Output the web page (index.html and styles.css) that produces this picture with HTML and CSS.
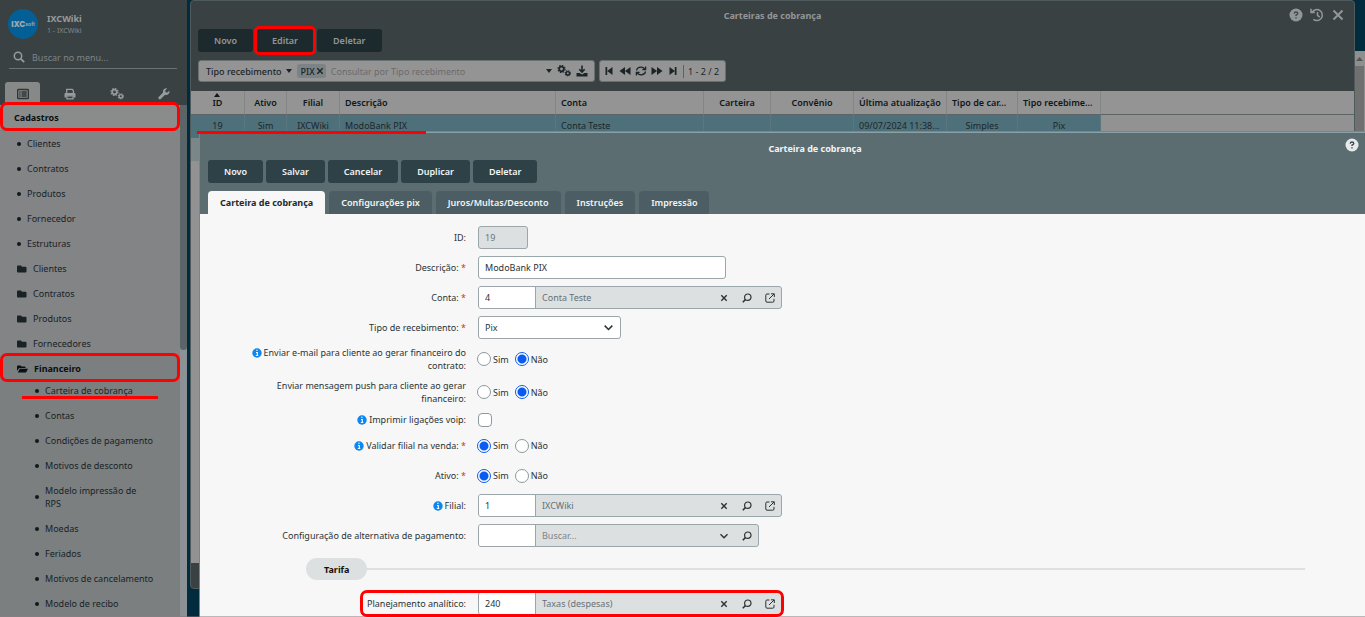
FILE: index.html
```html
<!DOCTYPE html>
<html lang="pt-BR">
<head>
<meta charset="utf-8">
<title>Carteira de cobrança</title>
<link rel="stylesheet" href="styles.css">
</head>
<body>
<svg class="sprite" aria-hidden="true">
  <symbol id="gears" viewBox="0 0 14 12"><g fill="none" stroke="currentColor"><circle cx="4.5" cy="4" r="2.3" stroke-width="1.700"/><circle cx="4.5" cy="4" r="3.500" stroke-width="1.200" stroke-dasharray="1.500 1.250"/><circle cx="10.8" cy="8.3" r="1.700" stroke-width="1.400"/><circle cx="10.8" cy="8.3" r="2.600" stroke-width="1.100" stroke-dasharray="1.200 .840"/></g></symbol>
  <symbol id="folder" viewBox="0 0 10 8"><path fill="currentColor" d="M1 .5h3l1 1.2h3.5q1 0 1 1V6.500q0 1-1 1H1q-1 0-1-1v-5q0-1 1-1z"/></symbol>
  <symbol id="folder-open" viewBox="0 0 11 8"><path fill="currentColor" d="M0 6V1.500q0-1 1-1h2.500l1 1H7.500q1 0 1 1V3H3Q2 3 1.500 3.800zM2.800 3.800H11L9.300 7q-.3.500-1 .5H.8z"/></symbol>
  <symbol id="help" viewBox="0 0 14 14"><circle cx="7" cy="7" r="6.500" fill="currentColor"/><path d="M5.200 5.600Q5.300 4 7 4t1.800 1.500Q8.800 6.500 7 7.200V8M7 9.200v1.400" fill="none" class="cut" stroke-width="1.400"/></symbol>
  <symbol id="info" viewBox="0 0 10 10"><circle cx="5" cy="5" r="4.700" fill="#0a87f0"/><path d="M4.200 2.300h1.500M4 4.500h1.300v3M3.800 7.500h2.500" fill="none" stroke="#fff" stroke-width="1.100"/></symbol>
  <symbol id="clear" viewBox="0 0 10 10"><path d="M2.300 2.300l5.400 5.400M7.700 2.300L2.300 7.700" fill="none" stroke="currentColor" stroke-width="1.400"/></symbol>
  <symbol id="find" viewBox="0 0 10 10"><circle cx="5.800" cy="4.200" r="3.200" fill="none" stroke="currentColor" stroke-width="1.200"/><path d="M3.500 6.500L.8 9.200" fill="none" stroke="currentColor" stroke-width="1.600"/></symbol>
  <symbol id="open" viewBox="0 0 10 10"><path d="M4.500 1H2Q.8 1 .8 2.200V8q0 1.200 1.200 1.200H7.800Q9 9.200 9 8V5.800M4 6l5-5M6 .8h3.300V4" fill="none" stroke="currentColor" stroke-width="1"/></symbol>
  <symbol id="chevron" viewBox="0 0 10 10"><path d="M1.500 3.300L5 6.800l3.500-3.500" fill="none" stroke="currentColor" stroke-width="1.400"/></symbol>
</svg>
<div class="desktop">
  <aside class="sidebar">
    <header class="side-head">
      <div class="user">
        <div class="avatar"><b>IXC</b><i>soft</i></div>
        <div><strong>IXCWiki</strong><small>1 - IXCWiki</small></div>
      </div>
      <label class="menu-search">
        <svg viewBox="0 0 12 12"><circle cx="5" cy="5" r="3.700" fill="none" stroke="currentColor" stroke-width="1.500"/><path d="M7.800 7.800l3.400 3.400" stroke="currentColor" stroke-width="1.800"/></svg>
        <input type="text" placeholder="Buscar no menu..." aria-label="Buscar no menu">
      </label>
      <div class="side-tabs">
        <button class="side-tab on" aria-label="Menu"><svg viewBox="0 0 12 11"><rect x=".6" y="1" width="10.800" height="9" rx="1" fill="none" stroke="currentColor" stroke-width="1.400"/><path d="M2.300 3.500h1.200M2.300 5.500h1.200M2.300 7.500h1.200M4.500 3.500h5.200M4.500 5.500h5.200M4.500 7.500h5.200" stroke="currentColor" stroke-width="1.300"/></svg></button>
        <button class="side-tab" aria-label="Imprimir"><svg viewBox="0 0 12 11"><path d="M2.700 5V.8h5.500l1.200 1.200v3" fill="none" stroke="currentColor" stroke-width="1.300"/><path d="M.5 5.500q0-1 1-1h9q1 0 1 1V9H9.500V7.200h-7V9H.5z" fill="currentColor"/><path d="M2.900 7.500h6.200v2.800H2.900z" fill="none" stroke="currentColor" stroke-width="1.200"/></svg></button>
        <button class="side-tab" aria-label="Sistema"><svg class="wide"><use href="#gears"/></svg></button>
        <button class="side-tab" aria-label="Ferramentas"><svg viewBox="0 0 12 12"><path d="M11.300 2.700L9.300 4.600 7.600 4.200 7.200 2.600 9.200.6Q7.400-.1 5.900 1.300 4.500 2.700 5 4.600L.7 8.900Q-.1 9.800.8 10.900q1 .9 2 .1L7.100 6.700q2 .6 3.400-.7 1.500-1.500.8-3.300z" fill="currentColor"/></svg></button>
      </div>
    </header>
    <div class="side-body">
      <nav class="menu">
        <a class="item group marked" href="#">Cadastros</a>
        <a class="item dot" href="#">Clientes</a>
        <a class="item dot" href="#">Contratos</a>
        <a class="item dot" href="#">Produtos</a>
        <a class="item dot" href="#">Fornecedor</a>
        <a class="item dot" href="#">Estruturas</a>
        <a class="item" href="#"><svg><use href="#folder"/></svg>Clientes</a>
        <a class="item" href="#"><svg><use href="#folder"/></svg>Contratos</a>
        <a class="item" href="#"><svg><use href="#folder"/></svg>Produtos</a>
        <a class="item" href="#"><svg><use href="#folder"/></svg>Fornecedores</a>
        <div class="submenu">
          <a class="item parent marked" href="#"><svg><use href="#folder-open"/></svg>Financeiro</a>
          <a class="item dot underlined" href="#">Carteira de cobrança</a>
          <a class="item dot" href="#">Contas</a>
          <a class="item dot" href="#">Condições de pagamento</a>
          <a class="item dot" href="#">Motivos de desconto</a>
          <a class="item dot" href="#"><span>Modelo impressão de<br>RPS</span></a>
          <a class="item dot" href="#">Moedas</a>
          <a class="item dot" href="#">Feriados</a>
          <a class="item dot" href="#">Motivos de cancelamento</a>
          <a class="item dot" href="#">Modelo de recibo</a>
        </div>
      </nav>
      <div class="side-scroll"><div class="side-thumb"></div></div>
    </div>
  </aside>

  <div class="page-scroll"><svg viewBox="0 0 10 15"><path d="M1 10l3.500-4L8 10z" fill="currentColor"/></svg><div class="page-thumb"></div></div>

  <section class="window list-window">
    <header class="list-head">
      <div class="titlebar">
        <h2>Carteiras de cobrança</h2>
        <div class="win-icons">
          <button aria-label="Ajuda"><svg><use href="#help"/></svg></button>
          <button aria-label="Histórico"><svg viewBox="0 0 14 14"><path d="M2.300 3.900A5.500 5.500 0 1 1 3.400 11.400M1 .8v3.700h3.800M7.500 4v3.400l2.200 1.800" fill="none" stroke="currentColor" stroke-width="1.500"/></svg></button>
          <button aria-label="Fechar"><svg viewBox="0 0 14 14"><path d="M2.500 2.500l9 9M11.500 2.500l-9 9" stroke="currentColor" stroke-width="2"/></svg></button>
        </div>
      </div>
      <div class="actions">
        <button class="btn">Novo</button>
        <button class="btn marked">Editar</button>
        <button class="btn">Deletar</button>
      </div>
      <div class="filters">
        <div class="filter">
          <button class="field-pick">Tipo recebimento<i class="caret"></i></button>
          <span class="chip">PIX<button aria-label="Remover PIX"><svg><use href="#clear"/></svg></button></span>
          <input type="text" placeholder="Consultar por Tipo recebimento" aria-label="Consultar">
          <button aria-label="Mais filtros"><i class="caret"></i></button>
          <button aria-label="Configurar"><svg class="wide"><use href="#gears"/></svg></button>
          <button aria-label="Exportar"><svg viewBox="0 0 12 12"><path d="M6 .5v6M3.300 4.300L6 7l2.700-2.700" fill="none" stroke="currentColor" stroke-width="1.600"/><path d="M.5 8h3l2.500 1.500L8.500 8h3v3.500H.5z" fill="currentColor"/></svg></button>
        </div>
        <div class="pager">
          <button aria-label="Primeira"><svg viewBox="0 0 12 10"><path d="M2.500 1h1.700v8H2.500zM9.500 1v8L4.200 5z" fill="currentColor"/></svg></button>
          <button aria-label="Anterior"><svg viewBox="0 0 12 10"><path d="M6 1v8L.5 5zM11.500 1v8L6 5z" fill="currentColor"/></svg></button>
          <button aria-label="Atualizar"><svg viewBox="0 0 12 10"><path d="M1.500 4.500Q2.200 1.200 6 1.200q2.500 0 3.800 2M10.500 5.500Q9.800 8.800 6 8.800 3.500 8.800 2.200 6.800M10.600.5v3.200H7.400M1.400 9.500V6.300h3.200" fill="none" stroke="currentColor" stroke-width="1.300"/></svg></button>
          <button aria-label="Próxima"><svg viewBox="0 0 12 10"><path d="M.5 1v8L6 5zM6 1v8l5.500-4z" fill="currentColor"/></svg></button>
          <button aria-label="Última"><svg viewBox="0 0 12 10"><path d="M2.500 1v8l5.300-4zM7.800 1h1.700v8H7.800z" fill="currentColor"/></svg></button>
          <span class="count">1 - 2 / 2</span>
        </div>
      </div>
    </header>
    <div class="grid-area">
      <table>
        <colgroup><col class="w-id"><col class="w-active"><col class="w-branch"><col class="w-desc"><col class="w-account"><col class="w-wallet"><col class="w-deal"><col class="w-date"><col class="w-kind"><col class="w-recv"><col></colgroup>
        <thead><tr><th class="sorted">ID</th><th>Ativo</th><th>Filial</th><th class="left">Descrição</th><th class="left">Conta</th><th>Carteira</th><th>Convênio</th><th class="left">Última atualização</th><th class="left">Tipo de car...</th><th class="left">Tipo recebime...</th><th></th></tr></thead>
        <tbody>
          <tr class="selected"><td>19</td><td>Sim</td><td>IXCWiki</td><td class="left">ModoBank PIX</td><td class="left">Conta Teste</td><td></td><td></td><td class="left">09/07/2024 11:38...</td><td>Simples</td><td>Pix</td><td></td></tr>
          <tr class="alt"><td></td><td></td><td></td><td></td><td></td><td></td><td></td><td></td><td></td><td></td><td></td></tr>
        </tbody>
      </table>
    </div>
    <footer class="list-foot"></footer>
  </section>

  <section class="window form-window">
    <header class="form-head">
      <div class="titlebar">
        <h2>Carteira de cobrança</h2>
        <div class="win-icons"><button aria-label="Ajuda"><svg><use href="#help"/></svg></button></div>
      </div>
      <div class="actions">
        <button class="btn">Novo</button><button class="btn">Salvar</button><button class="btn">Cancelar</button><button class="btn">Duplicar</button><button class="btn">Deletar</button>
      </div>
      <div class="tabs">
        <button class="tab on">Carteira de cobrança</button><button class="tab">Configurações pix</button><button class="tab">Juros/Multas/Desconto</button><button class="tab">Instruções</button><button class="tab">Impressão</button>
      </div>
    </header>
    <form class="form">
      <div class="row"><label for="f-id">ID:</label><input class="box short" id="f-id" value="19" disabled></div>
      <div class="row"><label for="f-desc">Descrição: <em>*</em></label><input class="box long" id="f-desc" value="ModoBank PIX"></div>
      <div class="row"><label for="f-conta">Conta: <em>*</em></label>
        <div class="lookup"><input id="f-conta" value="4"><input class="name" value="Conta Teste" aria-label="Nome da conta" readonly><button type="button" aria-label="Limpar"><svg><use href="#clear"/></svg></button><button type="button" aria-label="Buscar"><svg><use href="#find"/></svg></button><button type="button" aria-label="Abrir"><svg><use href="#open"/></svg></button></div></div>
      <div class="row"><label for="f-tipo">Tipo de recebimento: <em>*</em></label>
        <div class="select"><select class="box" id="f-tipo"><option>Pix</option></select><svg><use href="#chevron"/></svg></div></div>
      <div class="row"><span class="lbl"><svg><use href="#info"/></svg>Enviar e-mail para cliente ao gerar financeiro do contrato:</span>
        <div class="radios"><label><input type="radio" name="mail">Sim</label><label><input type="radio" name="mail" checked>Não</label></div></div>
      <div class="row"><span class="lbl">Enviar mensagem push para cliente ao gerar financeiro:</span>
        <div class="radios"><label><input type="radio" name="push">Sim</label><label><input type="radio" name="push" checked>Não</label></div></div>
      <div class="row compact"><label for="f-voip"><svg><use href="#info"/></svg>Imprimir ligações voip:</label><input type="checkbox" id="f-voip"></div>
      <div class="row"><span class="lbl"><svg><use href="#info"/></svg>Validar filial na venda: <em>*</em></span>
        <div class="radios"><label><input type="radio" name="val" checked>Sim</label><label><input type="radio" name="val">Não</label></div></div>
      <div class="row"><span class="lbl">Ativo: <em>*</em></span>
        <div class="radios"><label><input type="radio" name="ativo" checked>Sim</label><label><input type="radio" name="ativo">Não</label></div></div>
      <div class="row"><label for="f-filial"><svg><use href="#info"/></svg>Filial:</label>
        <div class="lookup"><input id="f-filial" value="1"><input class="name" value="IXCWiki" aria-label="Nome da filial" readonly><button type="button" aria-label="Limpar"><svg><use href="#clear"/></svg></button><button type="button" aria-label="Buscar"><svg><use href="#find"/></svg></button><button type="button" aria-label="Abrir"><svg><use href="#open"/></svg></button></div></div>
      <div class="row"><label for="f-conf">Configuração de alternativa de pagamento:</label>
        <div class="lookup"><input id="f-conf"><input class="name" placeholder="Buscar..." aria-label="Nome da configuração" readonly><button type="button" aria-label="Expandir"><svg><use href="#chevron"/></svg></button><button type="button" aria-label="Buscar"><svg><use href="#find"/></svg></button></div></div>
      <h3 class="divider"><span>Tarifa</span></h3>
      <div class="row"><label for="f-plan">Planejamento analítico:</label>
        <div class="lookup framed"><input id="f-plan" value="240"><input class="name" value="Taxas (despesas)" aria-label="Nome do planejamento" readonly><button type="button" aria-label="Limpar"><svg><use href="#clear"/></svg></button><button type="button" aria-label="Buscar"><svg><use href="#find"/></svg></button><button type="button" aria-label="Abrir"><svg><use href="#open"/></svg></button></div></div>
    </form>
    <i class="row-mark"></i>
  </section>
</div>
</body>
</html>
```
FILE: styles.css
```css
*, *::before, *::after { box-sizing: border-box; }
body { margin: 0; font: 9px/13px "Noto Sans", sans-serif; color: #2b3335; }
button, input, select { font: inherit; color: inherit; margin: 0; padding: 0; border: 0; background: none; outline: 0; min-width: 0; }
button { display: inline-flex; align-items: center; justify-content: center; flex: none; }
svg { display: block; flex: none; width: 12px; height: 12px; }
.sprite { position: absolute; width: 0; height: 0; }
h2, h3 { margin: 0; font-size: 9px; font-weight: 700; }
a { color: inherit; text-decoration: none; }
em { color: #e8262a; font-style: normal; }

.desktop { position: relative; height: 100vh; overflow: hidden; background: #022c3e; }
.desktop::after { content: ""; position: absolute; left: 0; right: 0; bottom: 0; height: 1px; background: #7d7a7c80; }

/* Sidebar */
.sidebar { width: 187px; height: 100%; display: flex; flex-direction: column; background: #3a4143; color: #192225; }
.side-head { padding: 9px 0 0 8px; color: #979b9c; flex: none; }
.user { display: flex; gap: 9px; align-items: center; height: 30px; }
.user strong, .user small { display: block; font-size: 9px; }
.user small { font-size: 7px; line-height: 12px; color: #838989; }
.avatar { width: 30px; height: 30px; border-radius: 50%; background: #035f96; display: flex; align-items: center; justify-content: center; color: #9aa7ad; }
.avatar b { font: 900 8px/12px Inter, sans-serif; }
.avatar i { font: 700 5px/9px Inter, sans-serif; }
.menu-search { display: flex; align-items: center; gap: 7px; margin: 7px 0 0 1px; padding-left: 4px; width: 168px; height: 23px; border-bottom: 1px solid #6b7274; }
.menu-search input { flex: 1; }
input::placeholder { color: #7e8485; opacity: 1; }
.side-tabs { display: flex; gap: 12px; margin: 13px 0 0 -3px; height: 23px; }
.side-tab { width: 35px; border-radius: 3px 3px 0 0; }
.side-tab.on { background: #878989; color: #2b3437; }
.wide { width: 14px; }
.side-body { flex: 1; min-height: 0; display: flex; }
.menu { flex: 1; min-width: 0; background: #828486; }
.item { display: flex; align-items: center; padding: 6px 24px 6px 17px; }
.item svg { width: 10px; height: 8px; margin-right: 6px; }
.dot::before { content: ""; flex: none; width: 4px; height: 4px; margin-right: 6px; border-radius: 50%; background: #10191c; }
.group { padding-left: 14px; font-weight: 700; background: #8a8c8c; border-bottom: 1px solid #7c8082; color: #0a0f10; }
.submenu { background: #7b7f80; }
.submenu .dot { padding-left: 35px; }
.parent { padding-bottom: 3px; font-weight: 700; color: #0a0f10; }
.parent svg { width: 11px; }
.side-scroll { width: 7px; background: #8b9195; }
.side-thumb { height: 245px; border-radius: 0 0 4px 4px; background: #5b6466; }

/* Red highlights */
.marked, .underlined, .framed { position: relative; }
.marked::after, .framed::after { content: ""; position: absolute; border: 3px solid #f00; border-radius: 7px; pointer-events: none; z-index: 2; }
.item.marked::after { left: 0; right: 0; top: -3px; height: 29px; }
.btn.marked::after { inset: -3px -2px; border-radius: 5px; }
.underlined::after { content: ""; position: absolute; left: 22px; right: 22px; bottom: 4px; height: 3px; background: #f00; }
.framed::after { inset: -3px -3px -3px -119px; }
.row-mark { position: absolute; left: -3px; top: -2px; width: 229px; height: 3px; background: #f00; }

/* Page scrollbar */
.page-scroll { position: absolute; top: 51px; right: 0; bottom: 0; width: 10px; background: #8e9090; color: #555; }
.page-scroll svg { width: 10px; height: 15px; }
.page-thumb { height: 400px; margin-right: 1px; background: #707070; }

/* Windows */
.window { position: absolute; display: flex; flex-direction: column; }
.list-window { left: 190px; right: 10px; top: 0; bottom: 28px; border: 1px solid #4f5a5d; border-radius: 4px; background: #3a4143; overflow: hidden; color: #1d2628; }
.form-window { left: 200px; right: -65px; top: 132px; bottom: 0; background: #f7f7f7; border-top: 1px solid #8aa0a7; box-shadow: 0 0 0 1px #7b8487; }
.titlebar { display: grid; grid-template-columns: 1fr auto 1fr; height: 28px; align-items: center; }
.titlebar h2 { grid-column: 2; }
.win-icons { display: flex; justify-content: flex-end; gap: 7px; }
.win-icons svg { width: 14px; height: 14px; }
.cut { stroke: #3f4a4d; }
.list-head { padding: 0 7px 9px; color: #939697; }
.list-head .win-icons { padding-right: 2px; }
.form-head { padding: 4px 8px 0; background: #5c6d71; color: #f2f5f5; }
.form-head .titlebar { height: 23px; }
.form-head .win-icons { padding-right: 63px; align-self: start; color: #e6eaea; }
.form-head .win-icons button { height: 16px; }
.actions { display: flex; gap: 3px; }
.btn { height: 23px; padding: 0 16px; border-radius: 3px; font-weight: 600; background: #1d2a2d; }
.form-head .btn { background: #2d4147; }

.filters { display: flex; gap: 4px; margin-top: 8px; height: 22px; color: #1b2527; }
.filter, .pager { display: flex; align-items: center; background: #949494; border: 1px solid #687072; border-radius: 3px; }
.filter { width: 397px; padding: 0 6px 0 7px; gap: 5px; }
.filter > input { flex: 1; }
.filter input::placeholder { color: #6b6b6b; }
.field-pick, .chip { font-weight: 500; }
.caret { width: 0; height: 0; border: 3px solid transparent; border-top: 4px solid #1b2527; border-bottom: 0; }
.field-pick .caret { margin-left: 4px; }
.chip { display: flex; align-items: center; height: 14px; padding: 0 1px 0 4px; border-radius: 3px; background: #7c8385; }
.chip svg { width: 10px; height: 10px; }
.pager { padding: 0 6px 0 3px; gap: 4px; }
.pager svg { width: 12px; height: 10px; }
.count { padding-left: 4px; border-left: 1px solid #5c6163; }

.grid-area { flex: 1; min-height: 0; background: #929292; }
table { width: 100%; table-layout: fixed; border-collapse: separate; border-spacing: 0; }
th, td { height: 23px; padding: 0 5px; text-align: center; white-space: nowrap; border-right: 1px solid #838585; }
td { padding-bottom: 2px; }
th { height: 24px; font-weight: 600; color: #0f1719; background: #949494; border-bottom: 1px solid #5d6466; }
th:last-child, td:last-child { border-right: 0; }
.left { text-align: left; }
.sorted { position: relative; }
.sorted::before { content: ""; position: absolute; left: 23px; top: 2px; border: 3px solid transparent; border-bottom: 4px solid #0f1719; border-top: 0; }
.selected td { background: #4e707a; border-color: #5a7780; }
.alt td { background: #7b8688; }
.selected td:last-child, .alt td:last-child { background: #929292; }
.w-id { width: 54px; }
.w-branch { width: 53px; }
.w-active { width: 42px; }
.w-desc { width: 216px; }
.w-account { width: 148px; }
.w-wallet { width: 67px; }
.w-deal { width: 83px; }
.w-date { width: 93px; }
.w-kind { width: 71px; }
.w-recv { width: 83px; }
.list-foot { height: 25px; }

.tabs { display: flex; gap: 4px; margin-top: 8px; }
.tab { height: 23px; padding: 0 12px; border-radius: 4px 4px 0 0; font-weight: 600; background: #4c5e63; }
.tab.on { background: #f7f7f7; color: #1c2b30; font-weight: 700; }

/* Form */
.form { display: flex; flex-direction: column; gap: 7px; padding: 12px 125px 0 50px; }
.row { display: grid; grid-template-columns: 216px 1fr; column-gap: 12px; align-items: center; justify-items: start; min-height: 23px; }
.row.compact { min-height: 15px; }
.row > label, .lbl { justify-self: end; text-align: right; }
.row > label svg, .lbl svg { display: inline-block; width: 10px; height: 10px; margin-right: 2px; vertical-align: -2px; }
.box, .lookup { height: 23px; border: 1px solid #9aa6aa; border-radius: 3px; background: #fff; }
.box { padding: 0 6px; }
.short { width: 50px; }
.short:disabled { background: #dce0e1; color: #6c7679; }
.long { width: 248px; }
.lookup { display: flex; background: #dce0e1; }
.lookup input { width: 57px; padding: 0 6px; background: #fff; border-right: 1px solid #9aa6aa; border-radius: 2px 0 0 2px; }
.lookup .name { width: 176px; background: none; border: 0; color: #667175; }
.lookup button { width: 23px; }
.lookup svg { width: 10px; height: 10px; }
.select { position: relative; width: 143px; }
.select select { width: 100%; appearance: none; }
.select svg { position: absolute; right: 7px; top: 6px; width: 11px; height: 11px; pointer-events: none; }
.radios { display: flex; gap: 6px; margin-left: -1px; }
.radios label { display: flex; align-items: center; gap: 2px; }
[type=radio], [type=checkbox] { appearance: none; width: 14px; height: 14px; border: 1px solid #8d999d; border-radius: 50%; background: #fff; }
[type=checkbox] { border-radius: 4px; }
[type=radio]:checked { border-color: #0a5cf0; background: radial-gradient(circle, #0a5cf0 4px, #fff 5px); }
.divider { display: flex; align-items: center; margin: 4px 0 5px 56px; color: #111; }
.divider span { padding: 5px 18px 4px; border-radius: 11px; background: #dce0e1; }
.divider::after { content: ""; flex: 1; height: 2px; background: #dce0e1; }
```
